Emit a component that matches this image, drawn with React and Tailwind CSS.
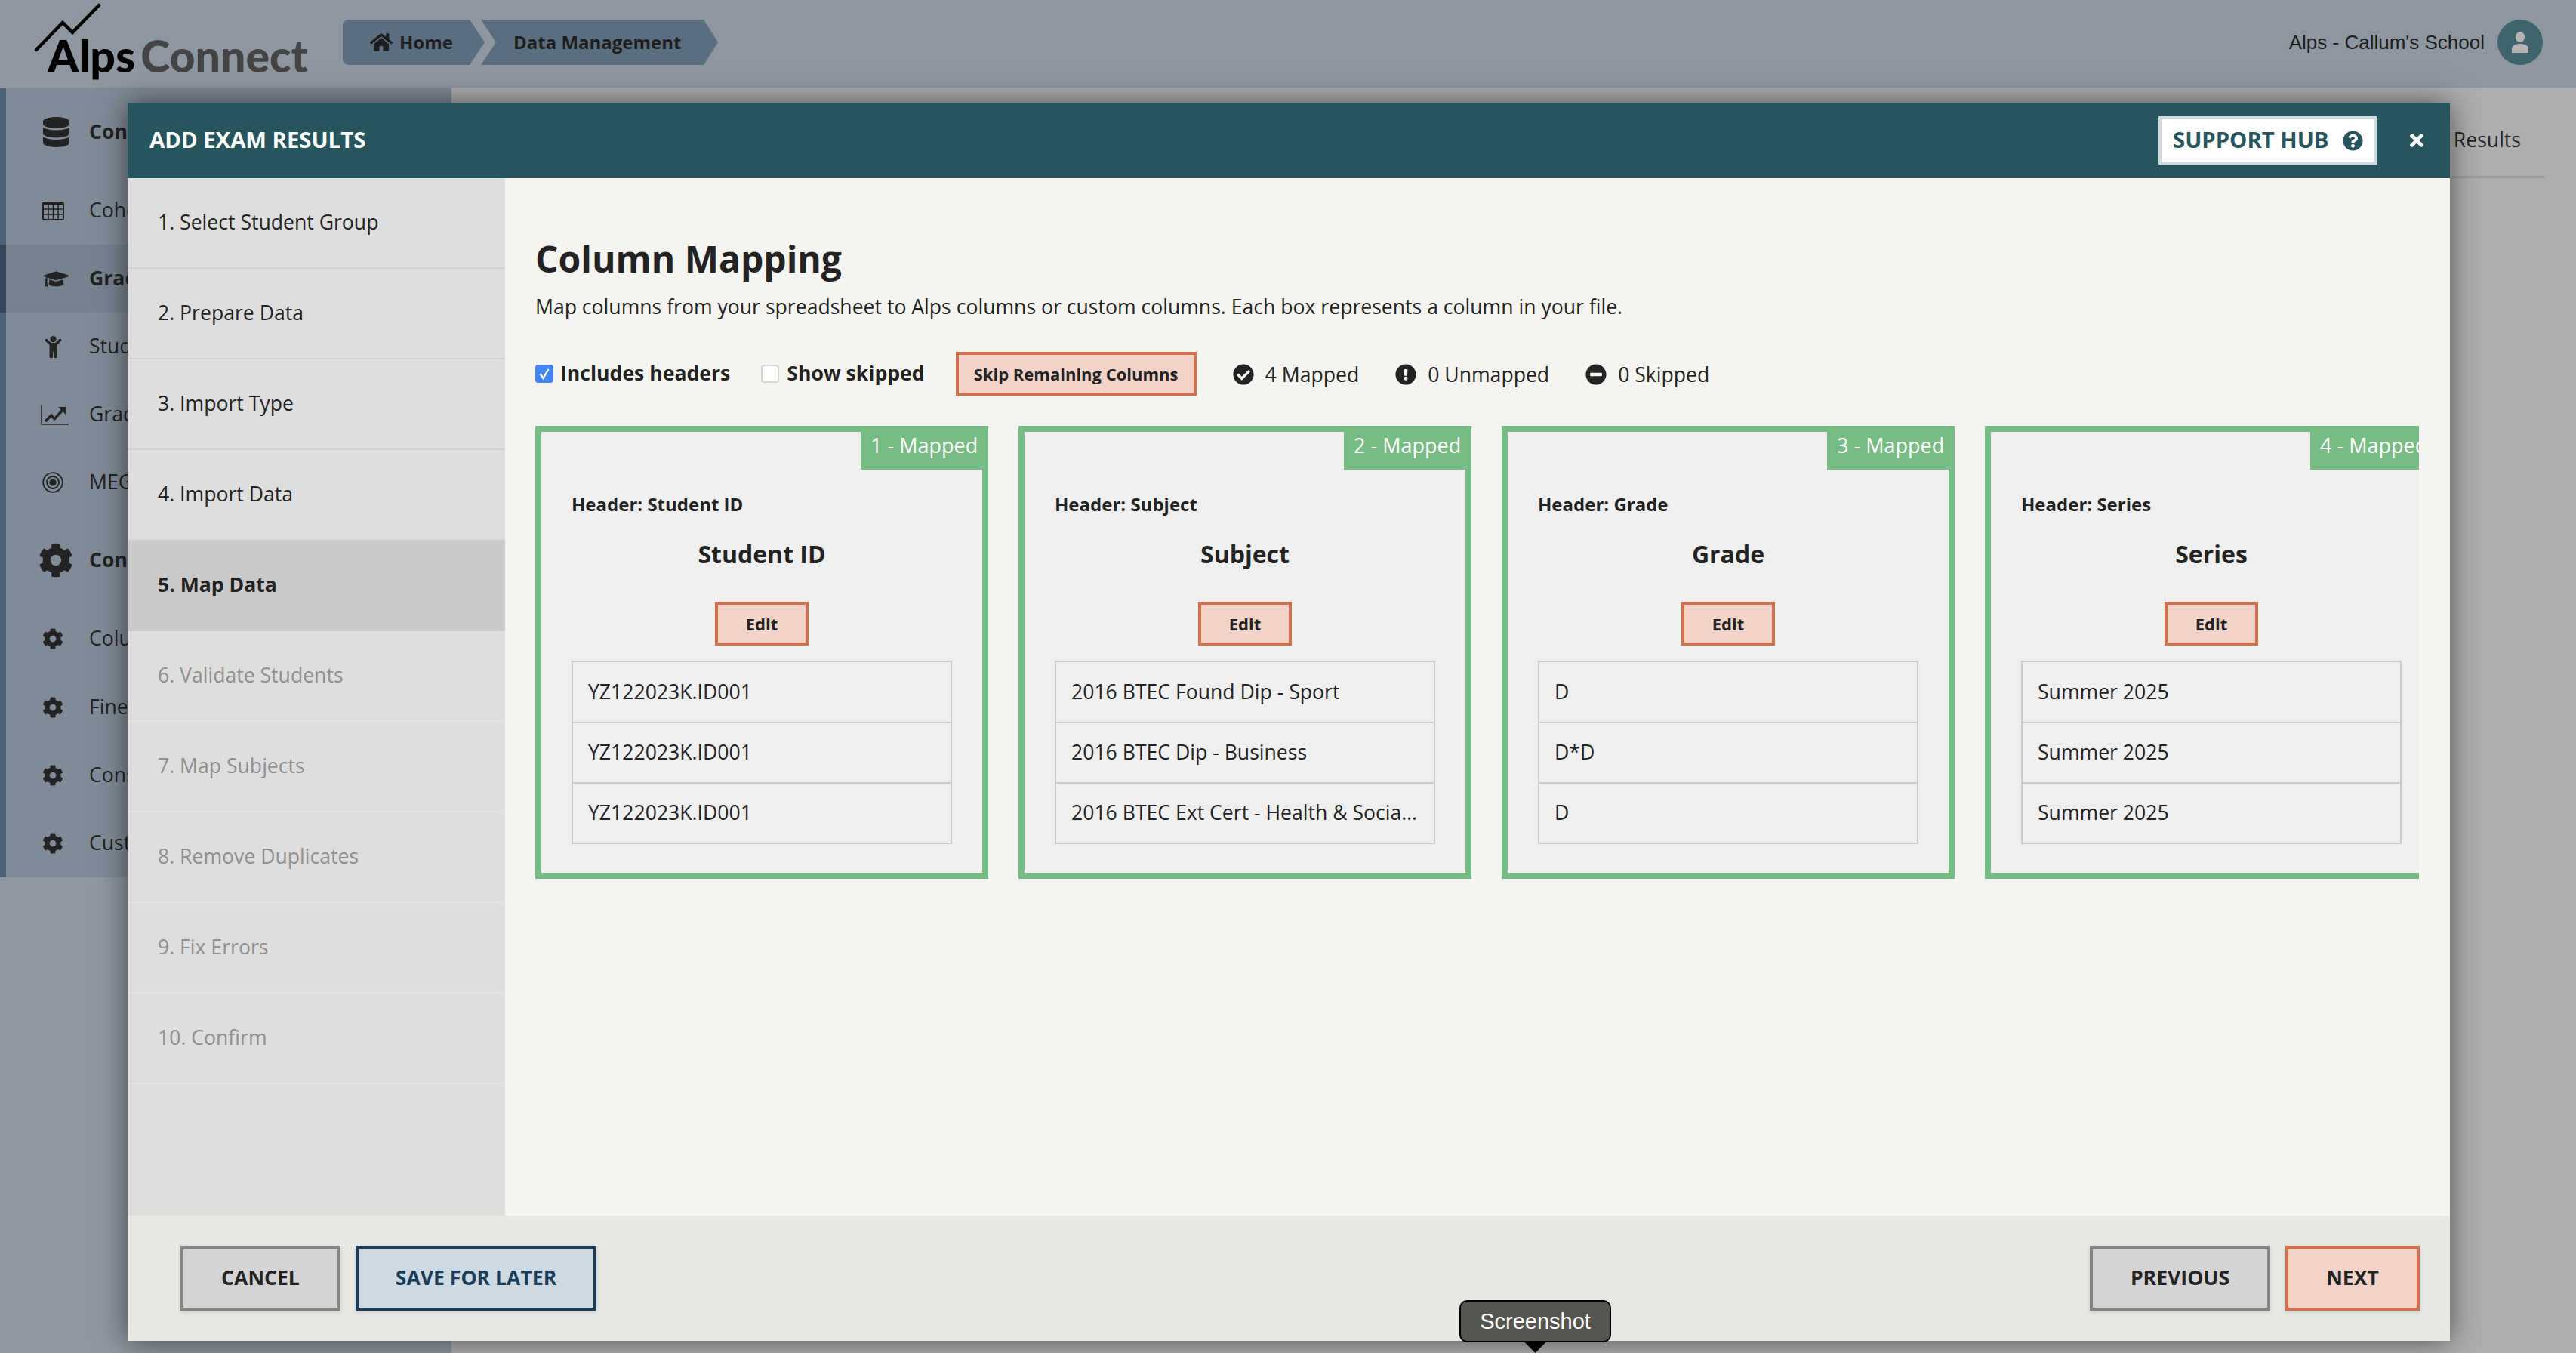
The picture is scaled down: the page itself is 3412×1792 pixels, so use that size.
import React from "react";
import {
  FaHome, FaDatabase, FaGraduationCap, FaChild, FaCog,
  FaQuestionCircle, FaTimes, FaCheckCircle, FaExclamationCircle, FaMinusCircle,
} from "react-icons/fa";

const font = "font-['Open_Sans',sans-serif]";

const steps = [
  "1. Select Student Group", "2. Prepare Data", "3. Import Type", "4. Import Data", "5. Map Data",
  "6. Validate Students", "7. Map Subjects", "8. Remove Duplicates", "9. Fix Errors", "10. Confirm",
];

const columns = [
  { n: 1, header: "Student ID", title: "Student ID", rows: ["YZ122023K.ID001", "YZ122023K.ID001", "YZ122023K.ID001"] },
  { n: 2, header: "Subject", title: "Subject", rows: ["2016 BTEC Found Dip - Sport", "2016 BTEC Dip - Business", "2016 BTEC Ext Cert - Health & Social Care"] },
  { n: 3, header: "Grade", title: "Grade", rows: ["D", "D*D", "D"] },
  { n: 4, header: "Series", title: "Series", rows: ["Summer 2025", "Summer 2025", "Summer 2025"] },
];

const Target = () => (
  <svg viewBox="0 0 28 28" className="w-[28px] h-[28px]" fill="none" stroke="#232323" strokeWidth="1.8">
    <circle cx="14" cy="14" r="12.8" />
    <circle cx="14" cy="14" r="8" />
    <circle cx="14" cy="14" r="4.6" fill="#232323" stroke="none" />
  </svg>
);

const GridIcon = () => (
  <svg viewBox="0 0 29 25" className="w-[29px] h-[25px]" fill="none" stroke="#232323">
    <rect x="1" y="1" width="27" height="23" rx="2" strokeWidth="2" />
    <path d="M1 3h27" strokeWidth="3" />
    <path d="M1 10h27M1 17h27M8 3v21M14.500 3v21M21 3v21" strokeWidth="1.6" />
  </svg>
);

const ChartIcon = () => (
  <svg viewBox="0 0 37 27" className="w-[37px] h-[27px] ml-[5px]" fill="none">
    <path d="M1 0v26h36" stroke="#232323" strokeWidth="1.6" />
    <path d="M6 22l8-8 4 5 11-12" stroke="#232323" strokeWidth="3.4" />
    <path d="M23 3h10v10z" fill="#232323" />
  </svg>
);

const navItems = [
  { y: "h-[118px]", icon: <FaDatabase className="text-[52px] ml-[9px]" />, label: "Connect", bold: true },
  { y: "h-[90px]", icon: <GridIcon />, label: "Cohorts" },
  { y: "h-[90px]", icon: <FaGraduationCap className="text-[33px] ml-[9px] shrink-0" />, label: "Grades", bold: true, active: true },
  { y: "h-[90px]", icon: <FaChild className="text-[29px]" />, label: "Students" },
  { y: "h-[90px]", icon: <ChartIcon />, label: "Grade Points" },
  { y: "h-[90px]", icon: <Target />, label: "MEGs" },
  { y: "h-[116px]", icon: <FaCog className="text-[46px] ml-[8px] shrink-0" />, label: "Config", bold: true },
  { y: "h-[92px]", icon: <FaCog className="text-[28px]" />, label: "Columns" },
  { y: "h-[90px]", icon: <FaCog className="text-[28px]" />, label: "Fine Grades" },
  { y: "h-[90px]", icon: <FaCog className="text-[28px]" />, label: "Consortia" },
  { y: "h-[90px]", icon: <FaCog className="text-[28px]" />, label: "Custom" },
];

function Logo() {
  return (
    <div className="relative w-[420px] h-[116px] shrink-0 self-start">
      <svg viewBox="0 0 140 70" className="absolute left-0 top-0 w-[140px] h-[70px]" fill="none" stroke="#000" strokeWidth="4.5" strokeLinecap="round">
        <path d="M48 66 L83 30 L96 43 L131 7" />
      </svg>
      <div className="absolute left-[63px] top-[36px] flex items-baseline font-['Lato',sans-serif] font-black text-[59px] leading-[76px]">
        <span className="text-black">Alps</span>
        <span className="text-[#444444] ml-[7px]">Connect</span>
      </div>
    </div>
  );
}

function TopBar() {
  return (
    <header className={`h-[116px] shrink-0 bg-[#8e969f] flex items-center pb-[4px] pr-[44px] ${font}`}>
      <Logo />
      <nav className="flex items-center ml-[34px] text-[24px] font-bold text-[#1e1e1e]">
        <div className="w-[188px] h-[60px] bg-[#5a6e80] rounded-l-[8px] flex items-center pl-[36px] gap-[9px] [clip-path:polygon(0_0,168px_0,188px_50%,168px_100%,0_100%)]">
          <FaHome className="text-[30px]" />
          Home
        </div>
        <div className="w-[314px] h-[60px] bg-[#5a6e80] -ml-[5px] flex items-center pl-[43px] [clip-path:polygon(0_0,295px_0,314px_50%,295px_100%,0_100%,20px_50%)]">
          Data Management
        </div>
      </nav>
      <div className="ml-auto flex items-center gap-[17px]">
        <span className="font-['Liberation_Sans',sans-serif] text-[26px] text-[#1e1e1e]">Alps - Callum's School</span>
        <div className="w-[60px] h-[60px] rounded-full bg-[#3f646e] flex items-center justify-center">
          <svg viewBox="0 0 24 28" className="w-[24px] h-[28px]" fill="#b5b5b5">
            <ellipse cx="12" cy="7" rx="6" ry="7" />
            <path d="M1 28v-5c0-5 5-7 11-7s11 2 11 7v5z" />
          </svg>
        </div>
      </div>
    </header>
  );
}

function SideNav() {
  return (
    <aside className="w-[598px] shrink-0 self-stretch bg-[#8e969f]">
      <div className={`h-[1046px] bg-[#808b97] border-l-[8px] border-[#4b6279] text-[26.6px] text-[#232323] ${font}`}>
        {navItems.map((item) => (
          <div
            key={item.label}
            className={`${item.y} -ml-[8px] flex items-center ${item.active ? "bg-[#76838f] border-l-[8px] border-[#364759] pl-[40px]" : "pl-[48px]"}`}
          >
            <div className="w-[44px] flex justify-center text-[#232323]">{item.icon}</div>
            <span className={`ml-[26px] ${item.bold ? "font-bold" : ""}`}>{item.label}</span>
          </div>
        ))}
      </div>
    </aside>
  );
}

function ColumnCard({ col }) {
  return (
    <div className="relative w-[600px] h-[600px] shrink-0 bg-[#efefef] border-[8px] border-[#76bc84] px-[40px] pt-[79px]">
      <div className="absolute -top-[8px] -right-[8px] w-[169px] h-[58px] bg-[#76bc84] text-white text-[27px] pl-[13px] leading-[52px] whitespace-nowrap">
        {col.n} - Mapped
      </div>
      <p className="text-[24px] font-bold leading-[34px] text-[#232323]">Header: {col.header}</p>
      <h3 className="mt-[27px] text-center text-[32px] font-bold leading-[44px] text-[#232323]">{col.title}</h3>
      <div className="mt-[41px] flex justify-center">
        <button className="w-[124px] h-[58px] bg-[#f1d3c9] border-[4px] border-[#d0714e] text-[22px] font-bold text-[#232323]">Edit</button>
      </div>
      <div className="mt-[20px] w-[504px] border-[2px] border-[#cccccc] text-[26.6px] text-[#232323]">
        {col.rows.map((r, i) => (
          <div key={i} className={`h-[79px] px-[20px] flex items-center ${i > 0 ? "border-t-[2px] border-[#cccccc] h-[80px]" : ""}`}>
            <span className="truncate">{r}</span>
          </div>
        ))}
      </div>
    </div>
  );
}

function Stat({ icon, text }) {
  return (
    <div className="flex items-center gap-[15px] text-[26.6px] font-normal text-[#232323] pt-[3px]">
      <span className="text-[28px]">{icon}</span>
      {text}
    </div>
  );
}

function Btn({ cls, children }) {
  return (
    <button className={`h-[86px] border-[4px] text-[26.6px] font-bold shadow-[0_2px_6px_rgba(0,0,0,0.12)] ${cls}`}>{children}</button>
  );
}

function Modal() {
  return (
    <div className={`absolute left-[169px] top-[136px] w-[3076px] h-[1640px] flex flex-col shadow-[0_0_36px_rgba(0,0,0,0.55)] ${font}`}>
      <div className="h-[100px] shrink-0 bg-[#26555e] flex items-center justify-between pl-[29px] pr-[31px]">
        <h2 className="text-[29.3px] font-bold text-white">ADD EXAM RESULTS</h2>
        <div className="flex items-center gap-[40px]">
          <div className="w-[289px] h-[64px] bg-white border-[4px] border-[#d0dadd] flex items-center pl-[15px] gap-[18px] text-[29.3px] font-bold text-[#26555e]">
            SUPPORT HUB
            <FaQuestionCircle className="text-[27px]" />
          </div>
          <FaTimes className="text-[26px] text-white" />
        </div>
      </div>

      <div className="flex-1 flex min-h-0">
        <ul className="w-[500px] shrink-0 bg-[#dedede] text-[26.6px]">
          {steps.map((s, i) => (
            <li
              key={s}
              className={`h-[120px] flex items-center pl-[40px] border-b-[2px] ${
                i === 4 ? "bg-[#cacaca] border-[#cacaca] font-bold text-[#232323]" : i > 4 ? "border-[#e3e3e3] text-[#909090]" : "border-[#d2d2d2] text-[#232323]"
              }`}
            >
              {s}
            </li>
          ))}
        </ul>

        <div className="flex-1 min-w-0 bg-[#f5f4f0] pl-[40px] pr-[41px] pt-[77px] text-[#232323]">
          <h1 className="text-[48px] font-bold leading-[60px]">Column Mapping</h1>
          <p className="mt-[15px] text-[26.6px] leading-[36px]">
            Map columns from your spreadsheet to Alps columns or custom columns. Each box represents a column in your file.
          </p>

          <div className="mt-[42px] h-[58px] flex items-center text-[26.6px] font-bold">
            <span className="w-[24px] h-[24px] rounded-[4px] bg-[#4285f4] flex items-center justify-center">
              <svg viewBox="0 0 16 16" className="w-[16px] h-[16px]" fill="none" stroke="#fff" strokeWidth="2.4">
                <path d="M2.500 8l4 6 7-12" />
              </svg>
            </span>
            <span className="ml-[9px]">Includes headers</span>
            <span className="ml-[41px] w-[24px] h-[24px] rounded-[4px] bg-white border-[2px] border-[#d6d6d6]" />
            <span className="ml-[10px]">Show skipped</span>
            <button className="ml-[41px] w-[319px] h-[58px] bg-[#f1d3c9] border-[4px] border-[#d0714e] text-[22px] font-bold">
              Skip Remaining Columns
            </button>
            <div className="ml-[48px] flex items-center gap-[48px]">
              <Stat icon={<FaCheckCircle />} text="4 Mapped" />
              <Stat icon={<FaExclamationCircle />} text="0 Unmapped" />
              <Stat icon={<FaMinusCircle />} text="0 Skipped" />
            </div>
          </div>

          <div className="mt-[40px] flex gap-[40px] overflow-hidden">
            {columns.map((c) => (
              <ColumnCard key={c.n} col={c} />
            ))}
          </div>
        </div>
      </div>

      <div className="h-[166px] shrink-0 bg-[#e9e8e3] flex items-center justify-between pl-[70px] pr-[40px]">
        <div className="flex gap-[20px]">
          <Btn cls="w-[212px] bg-[#d4d4d4] border-[#848484] text-[#232323]">CANCEL</Btn>
          <Btn cls="w-[319px] bg-[#cdd9e3] border-[#1c3d5a] text-[#1c3d5a]">SAVE FOR LATER</Btn>
        </div>
        <div className="flex gap-[20px]">
          <Btn cls="w-[239px] bg-[#d4d4d4] border-[#848484] text-[#232323]">PREVIOUS</Btn>
          <Btn cls="w-[178px] bg-[#f1d3c9] border-[#d0714e] text-[#232323]">NEXT</Btn>
        </div>
      </div>
    </div>
  );
}

function ScreenshotTip() {
  return (
    <div className="absolute left-[1933px] top-[1722px]">
      <div className="w-[201px] h-[56px] pt-[2px] rounded-[10px] bg-[#55554f] border-[2px] border-black flex items-center justify-center font-['Liberation_Sans',sans-serif] text-[29px] text-white">
        Screenshot
      </div>
      <div className="mx-auto -mt-[2px] w-[32px] h-[16px] bg-black [clip-path:polygon(0_0,100%_0,50%_100%)]" />
    </div>
  );
}

export default function App() {
  return (
    <div className="relative w-[3412px] h-[1792px] overflow-hidden bg-[#aeaeae] flex flex-col">
      <TopBar />
      <div className="flex-1 flex min-h-0">
        <SideNav />
        <main className={`flex-1 ${font}`}>
          <div className="mx-[42px] mt-[40px] h-[80px] pt-[10px] border-b-[3px] border-[#9a9a9a] flex items-start justify-end pr-[31px] text-[26.6px] leading-[38px] text-[#232323]">
            Results
          </div>
        </main>
      </div>
      <Modal />
      <ScreenshotTip />
    </div>
  );
}
